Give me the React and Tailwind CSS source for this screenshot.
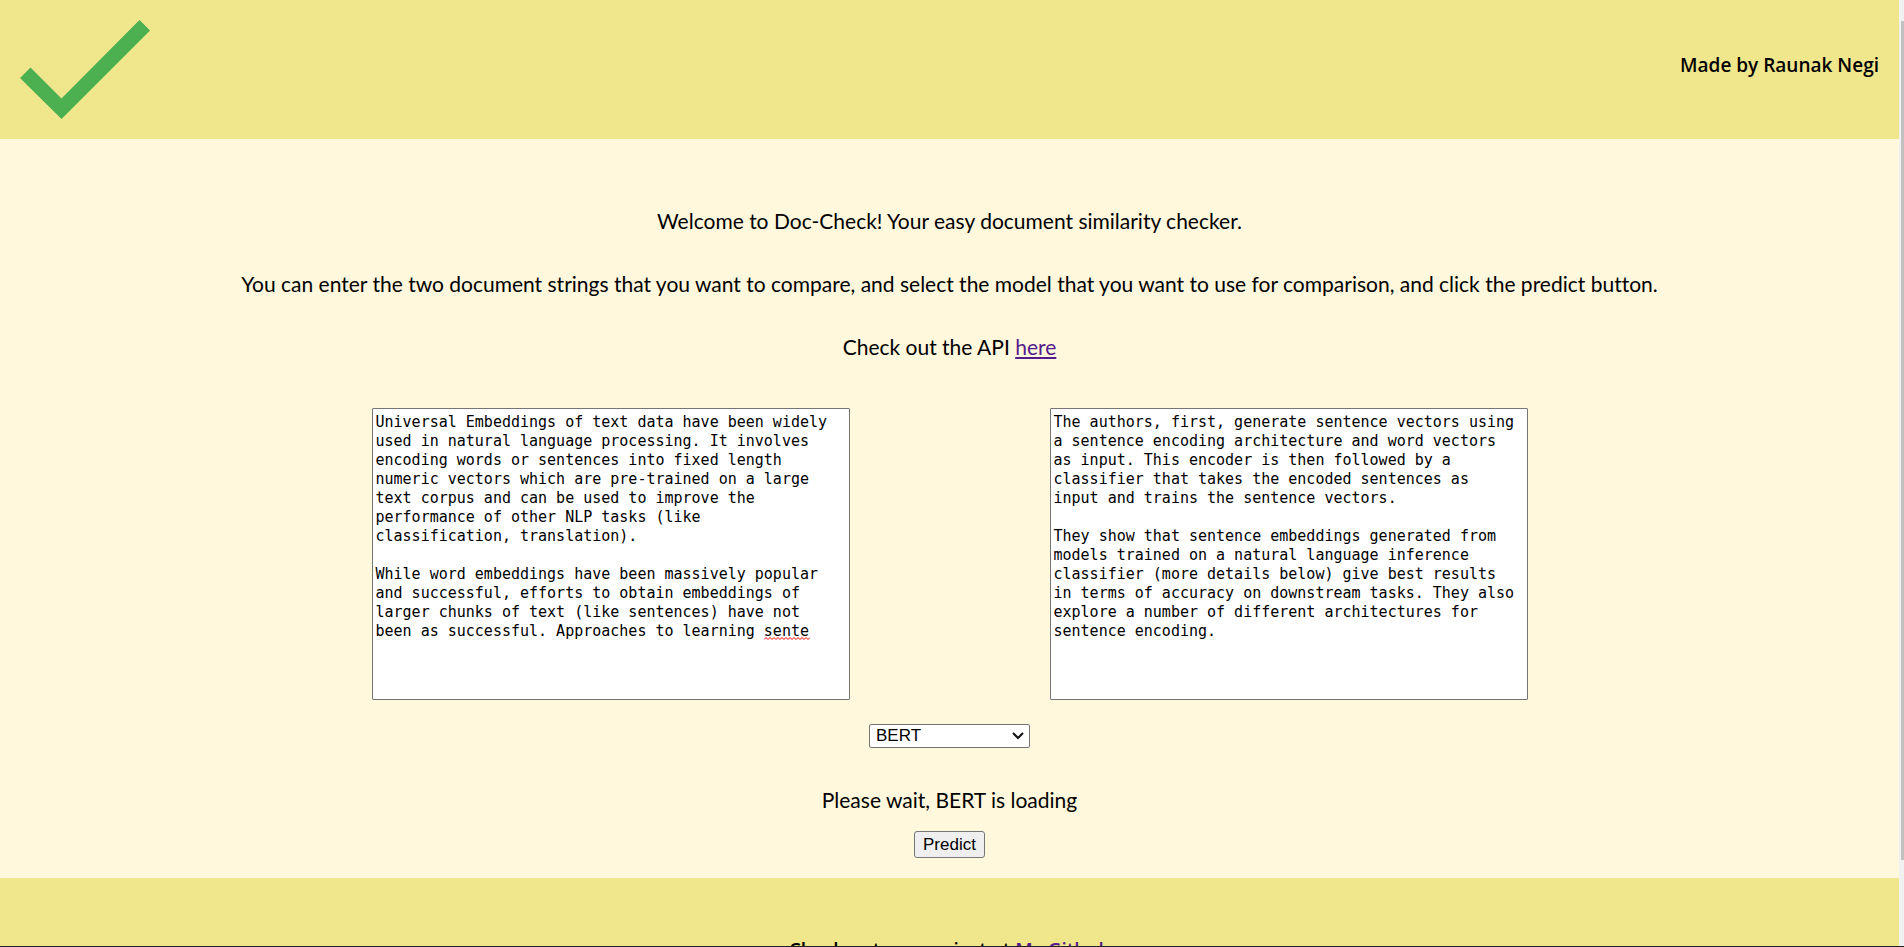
const DOC_ONE = `Universal Embeddings of text data have been widely used in natural language processing. It involves encoding words or sentences into fixed length numeric vectors which are pre-trained on a large text corpus and can be used to improve the performance of other NLP tasks (like classification, translation).

While word embeddings have been massively popular and successful, efforts to obtain embeddings of larger chunks of text (like sentences) have not been as successful. Approaches to learning sente`;

const DOC_TWO = `The authors, first, generate sentence vectors using a sentence encoding architecture and word vectors as input. This encoder is then followed by a classifier that takes the encoded sentences as input and trains the sentence vectors.

They show that sentence embeddings generated from models trained on a natural language inference classifier (more details below) give best results in terms of accuracy on downstream tasks. They also explore a number of different architectures for sentence encoding.`;

function DocBox({ label, text, children }) {
  return (
    <div className="relative">
      <textarea
        aria-label={label}
        defaultValue={text}
        spellCheck={false}
        className="block h-[292px] w-[478px] resize-none overflow-hidden rounded-[1px] border border-[#767676] bg-white py-1 pr-[10px] pl-[3px] font-['DejaVu_Sans_Mono',monospace] text-[15px] leading-[19px] text-black"
      />
      {children}
    </div>
  );
}

export default function App() {
  return (
    <div className="flex h-screen overflow-hidden border-b border-[#222] font-['Lato',sans-serif] text-[21px] leading-6 text-black [font-variant-ligatures:none]">
      <div className="flex min-w-0 grow flex-col bg-[#fff8dc]">
        <header className="flex shrink-0 items-center justify-between bg-[#f0e68c] px-5 pt-5 pb-5">
          <svg viewBox="0 0 130 99" className="h-[99px] w-[130px]" aria-label="Doc-Check" role="img">
            <path d="M0 58 10.500 47.500 41.500 78.500 119.500 0 130 10.500 41.500 99Z" fill="#4caf50" />
          </svg>
          <p className="pb-[10px] font-['Open_Sans',sans-serif] text-[19px] font-semibold">Made by Raunak Negi</p>
        </header>
        <main className="flex shrink-0 flex-col items-center pt-[70px] pb-5">
          <div className="flex flex-col items-center gap-[39px] text-center">
            <p>Welcome to Doc-Check! Your easy document similarity checker.</p>
            <p>
              You can enter the two document strings that you want to compare, and select the model that you want to use
              for comparison, and click the predict button.
            </p>
            <p>
              Check out the API{" "}
              <a href="#api" className="text-[#551a8b] underline">
                here
              </a>
            </p>
          </div>
          <div className="mt-[49px] flex justify-center gap-[200px]">
            <DocBox label="First document" text={DOC_ONE}>
              <svg
                viewBox="0 0 46 3"
                className="pointer-events-none absolute top-[229px] left-[392px] h-[3px] w-[46px]"
                aria-hidden="true"
              >
                <path
                  d="M0 2.500 2 .5 4 2.500 6 .5 8 2.500 10 .5 12 2.500 14 .5 16 2.500 18 .5 20 2.500 22 .5 24 2.500 26 .5 28 2.500 30 .5 32 2.500 34 .5 36 2.500 38 .5 40 2.500 42 .5 44 2.500 46 .5"
                  fill="none"
                  stroke="#f00"
                />
              </svg>
            </DocBox>
            <DocBox label="Second document" text={DOC_TWO} />
          </div>
          <div className="relative mt-6">
            <select
              aria-label="Model"
              className="block h-6 w-[161px] appearance-none rounded-[2px] border border-[#767676] bg-white px-[6px] font-['Liberation_Sans',sans-serif] text-[17px] leading-5"
            >
              <option>BERT</option>
            </select>
            <svg viewBox="0 0 12 8" className="pointer-events-none absolute top-2 right-[6px] h-2 w-3" aria-hidden="true">
              <path d="M1 1 6 6 11 1" fill="none" stroke="#111" strokeWidth="2" />
            </svg>
          </div>
          <p className="mt-10">Please wait, BERT is loading</p>
          <button
            type="button"
            className="mt-[19px] h-[27px] w-[71px] rounded-[3px] border border-[#767676] bg-[#efefef] font-['Liberation_Sans',sans-serif] text-[17px] leading-5"
          >
            Predict
          </button>
        </main>
        <footer className="grow bg-[#f0e68c] pt-[60px] text-center font-['Open_Sans',sans-serif] text-[19px] font-semibold">
          <p>
            Check out our project at{" "}
            <a href="#github" className="text-[#551a8b] underline">
              My Github
            </a>
          </p>
        </footer>
      </div>
      <div className="flex w-[5px] shrink-0 flex-col bg-[#f1f1f1] pt-[21px] pb-[86px] pl-[2px]" aria-hidden="true">
        <div className="grow bg-[#c1c1c1]" />
      </div>
    </div>
  );
}
